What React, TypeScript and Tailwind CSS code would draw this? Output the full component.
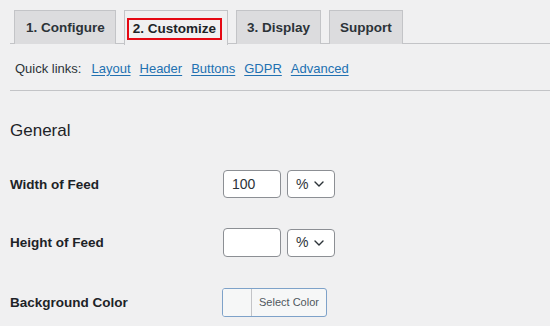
import { useState } from 'react';

const tabs = ['1. Configure', '2. Customize', '3. Display', 'Support'];
const quickLinks = ['Layout', 'Header', 'Buttons', 'GDPR', 'Advanced'];

function Chevron() {
  return (
    <svg width="10" height="6" viewBox="0 0 10 6" fill="none" className="ml-auto">
      <path d="M1 1l4 4 4-4" stroke="#2c3338" strokeWidth="1.4" strokeLinecap="round" strokeLinejoin="round" />
    </svg>
  );
}

function UnitSelect() {
  return (
    <div className="ml-[6px] flex h-[28px] w-[48px] items-center rounded-[4px] border border-[#8c8f94] bg-white pl-[8px] pr-[10px] text-[14px] text-[#2c3338]">
      <span>%</span>
      <Chevron />
    </div>
  );
}

export default function App() {
  const [active] = useState(1);
  const [width, setWidth] = useState('100');
  const [height, setHeight] = useState('');

  return (
    <div
      className="h-[326px] w-full overflow-hidden bg-[#f0f0f1] text-[#1d2327]"
      style={{ fontFamily: '"Liberation Sans", Arial, sans-serif' }}
    >
      <nav className="ml-[10px] mt-[10px] flex h-[34px] gap-[8px] border-b border-[#c3c4c7] pl-[4px]">
        {tabs.map((t, i) =>
          i === active ? (
            <div
              key={t}
              className="-mb-px flex h-[35px] items-center border border-b-0 border-[#c3c4c7] bg-[#f0f0f1] pl-[2px] pr-[5px] pt-[2px]"
            >
              <span className="flex h-[22px] items-center border-2 border-[#e50914] px-[4px] text-[13.5px] font-bold text-[#1d2327]">
                {t}
              </span>
            </div>
          ) : (
            <div
              key={t}
              className={`flex h-[34px] items-center border border-b-0 border-[#c3c4c7] bg-[#dcdcde] pt-[2px] text-[13.5px] font-bold text-[#2c3338] ${
                i === 0 ? 'pl-[11px] pr-[10px]' : 'px-[10px]'
              }`}
            >
              {t}
            </div>
          )
        )}
      </nav>

      <div className="ml-[10px] flex h-[47px] items-center border-b border-[#c3c4c7] pl-[5px] pt-[3px] text-[13px]">
        <span className="mr-[10px] text-[#2c3338]">Quick links:</span>
        <div className="flex gap-[9px]">
          {quickLinks.map((l) => (
            <a key={l} href="#" className="text-[#2271b1] underline underline-offset-2">
              {l}
            </a>
          ))}
        </div>
      </div>

      <div className="px-[10px]">
        <h2 className="mt-[28px] text-[17px] leading-[24px] text-[#1d2327]">General</h2>

        <div className="mt-[27px] flex h-[28px] items-center">
          <label className="w-[213px] pt-[2px] text-[13.5px] font-bold">Width of Feed</label>
          <input
            value={width}
            onChange={(e) => setWidth(e.target.value)}
            className="h-[28px] w-[58px] rounded-[4px] border border-[#8c8f94] bg-white px-[8px] text-[14px] text-[#2c3338] outline-none"
          />
          <UnitSelect />
        </div>

        <div className="mt-[30px] flex h-[29px] items-center">
          <label className="w-[213px] pt-[2px] text-[13.5px] font-bold">Height of Feed</label>
          <input
            value={height}
            onChange={(e) => setHeight(e.target.value)}
            className="h-[29px] w-[58px] rounded-[4px] border border-[#8c8f94] bg-white px-[8px] text-[14px] text-[#2c3338] outline-none"
          />
          <UnitSelect />
        </div>

        <div className="mt-[31px] flex h-[29px] items-center">
          <label className="w-[212px] pt-[2px] text-[13.5px] font-bold">Background Color</label>
          <button className="flex h-[29px] w-[105px] overflow-hidden rounded-[3px] border border-[#7ea2c9] bg-[#f6f7f7]">
            <span className="h-full w-[29px] border-r border-[#c3c4c7] bg-[#f6f7f7]" />
            <span className="flex flex-1 items-center justify-center text-[11px] text-[#50575e]">Select Color</span>
          </button>
        </div>
      </div>
    </div>
  );
}
